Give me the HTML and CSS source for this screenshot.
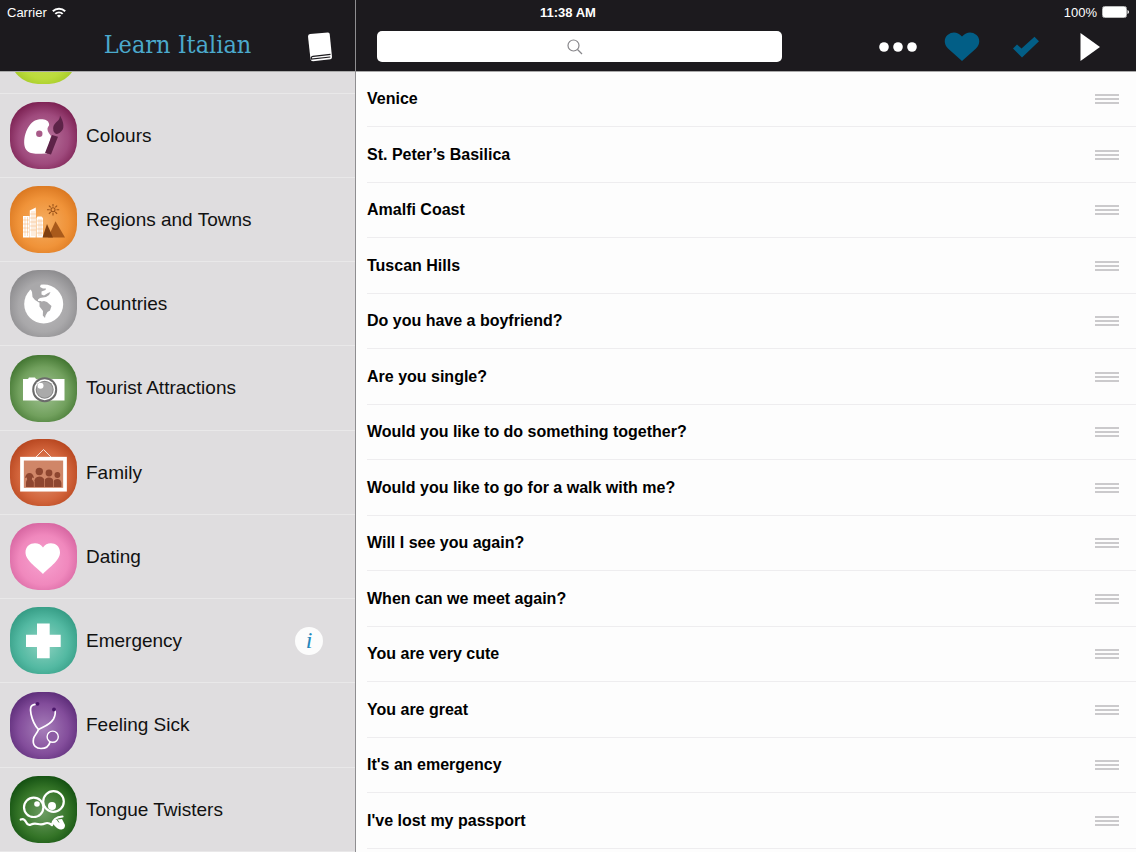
FILE: index.html
```html
<!DOCTYPE html>
<html lang="en">
<head>
  <meta charset="UTF-8">
  <meta name="viewport" content="width=device-width, initial-scale=1.0">
  <title>Learn Italian</title>
  <link rel="stylesheet" href="styles.css">
</head>
<body>
  <div class="status-bar">
    <span class="status-left">Carrier
      <svg width="14" height="11" viewBox="0 0 14 11" fill="none" stroke="#fff" stroke-width="2"><path d="M.8 4.2a9 9 0 0 1 12.4 0M3.3 6.9a5.3 5.3 0 0 1 7.4 0"/><path d="M7 10.8 4.9 8.7a3 3 0 0 1 4.2 0z" fill="#fff" stroke="none"/></svg>
    </span>
    <strong>11:38 AM</strong>
    <span class="status-right">100%
      <svg width="27" height="12" viewBox="0 0 27 12"><rect x=".5" y=".5" width="24" height="11" rx="2" fill="none" stroke="#bbb"/><rect x="1" y="1" width="23" height="10" rx="1" fill="#fff"/><path d="M25.500 4v4q1.500-.5 1.500-2t-1.500-2z" fill="#fff"/></svg>
    </span>
  </div>

  <div class="app">
    <aside class="sidebar">
      <header class="bar sidebar-bar">
        <h1>Learn Italian</h1>
        <button class="book" aria-label="Phrasebook">
          <svg width="26" height="30" viewBox="0 0 26 30"><path d="M3 2 21 .5q1.500 0 1.700 1.500L25 25q0 2-1.500 2.300L6 29.300q-2 0-2.500-2L1 4.500Q1 2.300 3 2z" fill="#fff"/><path d="M23.500 22.300 6 24.300q-2.300.7-1.700 2.700l19-2" fill="none" stroke="#1c1a1e" stroke-width="1.200"/></svg>
        </button>
      </header>

      <nav class="categories">
        <a href="#" class="category partial" aria-label="Previous category"><span class="tile lime"></span></a>

        <a href="#colours" class="category">
          <span class="tile plum"><svg viewBox="0 0 67 67">
            <path d="M38.500 20.500C38 17.500 31 16 25 18.500C16 23 11.500 40 16 47.500C21 54 31 51 37 51.500L41 34Q36 28 38 25Q40 23 38.500 20.500z" fill="#fff"/>
            <circle cx="29.300" cy="31.700" r="3.200" fill="#a85a88"/>
            <path d="M50 13.500C52 17 54.500 22 53 27Q50 32 46 32Q42 29 43.500 24C45 20 50 19 50 13.500zM42 33l6 1.700L41 52.500 35 51z" fill="#5d2348"/>
          </svg></span>
          <span>Colours</span>
        </a>

        <a href="#regions" class="category">
          <span class="tile orange"><svg viewBox="0 0 67 67">
            <path d="M13 30h6.500v21.500H13zM19.800 24.500l6-3v30h-6zM26.500 32l1-1.500h4l1.500 1.500v19.500h-6.500z" fill="#fff"/>
            <path d="M13 34h6M13 38h6M13 42h6M13 46h6M20 28h6M20 32h6M20 36h6M20 40h6M20 44h6M27 35h6M27 39h6M27 43h6M27 47h6M15 31v19M17.500 31v19M22 25v25M24 25v25M29 33v17M31 33v17" stroke="#f2a455" stroke-width=".4"/>
            <path d="M38 51.500 45.500 35.300 55 51.500z" fill="#a95a1b"/><path d="M32.500 51.500 37 38l6 13.500z" fill="#7f3f10"/>
            <g fill="none" stroke="#9a5219" stroke-width="1.100"><circle cx="43" cy="23.700" r="2"/><path d="M43 18v2.500M43 27v2.500M37 23.700h2.700M46.500 23.700h2.700M38.900 19.600l1.800 1.800M45.300 26l1.800 1.800M38.900 27.800l1.800-1.800M45.300 21.400l1.800-1.800"/></g>
          </svg></span>
          <span>Regions and Towns</span>
        </a>

        <a href="#countries" class="category">
          <span class="tile silver"><svg viewBox="0 0 67 67">
            <circle cx="33.700" cy="34" r="19.500" fill="#fff"/>
            <path d="M20 18 24 15 31 13.800 30 17 33 18.500 36 18.500 35.500 20 31.500 21.500 31.500 24.500 34 25.500 38 23 40.500 22 39 25 36 27 33 27.500 30 28 28 29.500 28 31 31 31 32 33 29 32.500 25 30 22.500 27 22 22z" fill="#a9a8aa"/>
            <path d="M29.500 32 34 31 37 32 41.500 36 40 40.500 37.500 42 35.500 45.500 35 48 32.800 45.500 33 41 29.500 36.500z" fill="#a9a8aa"/>
          </svg></span>
          <span>Countries</span>
        </a>

        <a href="#attractions" class="category">
          <span class="tile green"><svg viewBox="0 0 67 67">
            <path d="M13 24h5l1-1.500h6L26 24h28.500v21.500H13z" fill="#fff"/>
            <circle cx="34.700" cy="34.700" r="12.500" fill="#6b6b6b"/><circle cx="34.700" cy="34.700" r="10.500" fill="#fff"/>
            <circle cx="34.700" cy="34.700" r="9" fill="#888"/><circle cx="34.700" cy="34.700" r="8" fill="#aaa"/>
            <circle cx="30.500" cy="30.700" r="3" fill="#fff"/>
          </svg></span>
          <span>Tourist Attractions</span>
        </a>

        <a href="#family" class="category">
          <span class="tile rust"><svg viewBox="0 0 67 67">
            <path d="M26 18l7.500-7.500L41 18" fill="none" stroke="#fff" stroke-width=".8"/>
            <rect x="12" y="19.700" width="43" height="31" fill="#d08668" stroke="#fff" stroke-width="3.700"/>
            <g fill="#8e4630"><circle cx="29.300" cy="32.500" r="3.700"/><circle cx="39" cy="34" r="3.400"/><circle cx="47.400" cy="36" r="2.900"/><path d="M15 39q1-5 4.500-5t4.500 5l-2-.5v2h-5v-2zM16 48v-4q0-4 3.500-4t4.500 3.500Q24.500 37.500 29.300 37.500T34.500 42Q35 38.500 39 38.500t4.500 4Q44 40 47.400 40t4 4v4z"/></g>
            <path d="M24.300 42v6M34.500 41v7M43.500 41v7" stroke="#d08668" stroke-width=".7"/>
          </svg></span>
          <span>Family</span>
        </a>

        <a href="#dating" class="category">
          <span class="tile pink"><svg viewBox="0 0 67 67">
            <path d="M33 51C29 46 15.500 38 15.500 29.500C15.500 19 29 17.500 33 24.500C37 17.500 50 19 50 29.500C50 38 37 46 33 51z" fill="#fff"/>
          </svg></span>
          <span>Dating</span>
        </a>

        <a href="#emergency" class="category">
          <span class="tile teal"><svg viewBox="0 0 67 67">
            <path d="M27 16.500h12.700v11.300h11V40h-11v11.300H27V40H16V27.800h11z" fill="#fff"/>
          </svg></span>
          <span>Emergency</span>
          <span class="info">i</span>
        </a>

        <a href="#sick" class="category">
          <span class="tile violet"><svg viewBox="0 0 67 67">
            <g fill="none" stroke="#fff" stroke-width="1.700" stroke-linecap="round"><path d="M25 12.300C20 13 20 17 21 22C22.500 29 25 34 28.500 37.500C33 35 40 33 43.500 27Q46 22 45 18.500"/><path d="M28.500 37.500C27 42 24 43 23.500 47C22 54 27 56.500 31 56.500C36 56.500 39 54 40 50"/><circle cx="42.700" cy="44.700" r="5.600" fill="#8e5da5" stroke-width="1.400"/></g>
            <circle cx="27.500" cy="11.800" r="1.900" fill="#4b176b"/><circle cx="44" cy="17.500" r="1.900" fill="#4b176b"/>
          </svg></span>
          <span>Feeling Sick</span>
        </a>

        <a href="#tongue-twisters" class="category">
          <span class="tile forest"><svg viewBox="0 0 67 67">
            <g fill="none" stroke="#fff" stroke-width="2.200" stroke-linecap="round"><circle cx="23.700" cy="31.300" r="9.700"/><circle cx="43.500" cy="25.500" r="10.300"/><path d="M10.700 43.500Q14 42 16 46T21 48.500T28 48T35 47.500T42 49M42 49Q43 41 52.500 40.500"/></g>
            <circle cx="27" cy="28" r="2.800" fill="#fff"/><circle cx="42" cy="30" r="4" fill="#fff"/>
            <path d="M43 44l9-1 3 6q0 4-3.500 4.500T43 48z" fill="#fff"/><path d="M47 43.500l2 3" stroke="#2c6b22" stroke-width=".8"/>
          </svg></span>
          <span>Tongue Twisters</span>
        </a>
      </nav>
    </aside>

    <main class="content">
      <header class="bar content-bar">
        <label class="search">
          <svg width="16" height="16" viewBox="0 0 16 16" fill="none" stroke="#88878b" stroke-width="1.200"><circle cx="6.500" cy="6.500" r="5.500"/><path d="M10.500 10.500 15 15"/></svg>
          <input type="search" aria-label="Search phrases">
        </label>
        <div class="tools">
          <button aria-label="More"><svg width="38" height="10" viewBox="0 0 38 10" fill="#fff"><circle cx="5" cy="5" r="4.800"/><circle cx="19" cy="5" r="4.800"/><circle cx="33" cy="5" r="4.800"/></svg></button>
          <button aria-label="Favourites"><svg width="36" height="30" viewBox="0 0 36 30"><path d="M18 29 4 16.500C-.5 12 0 6 3.500 3Q11-2.500 18 4.500Q25-2.500 32.500 3C36 6 36.500 12 32 16.500z" fill="#025e86"/></svg></button>
          <button aria-label="Learned"><svg width="28" height="22" viewBox="0 0 28 22"><path d="M1 12.500 5 8.500 9.500 12.500 22.500.8 27 5.300 10 21.500z" fill="#025e86"/></svg></button>
          <button aria-label="Play"><svg width="20" height="28" viewBox="0 0 20 28"><path d="M.5 0 20 14 .5 28z" fill="#fff"/></svg></button>
        </div>
      </header>

      <ul class="phrases">
        <li>Venice <button class="handle" aria-label="Reorder"></button></li>
        <li>St. Peter’s Basilica <button class="handle" aria-label="Reorder"></button></li>
        <li>Amalfi Coast <button class="handle" aria-label="Reorder"></button></li>
        <li>Tuscan Hills <button class="handle" aria-label="Reorder"></button></li>
        <li>Do you have a boyfriend? <button class="handle" aria-label="Reorder"></button></li>
        <li>Are you single? <button class="handle" aria-label="Reorder"></button></li>
        <li>Would you like to do something together? <button class="handle" aria-label="Reorder"></button></li>
        <li>Would you like to go for a walk with me? <button class="handle" aria-label="Reorder"></button></li>
        <li>Will I see you again? <button class="handle" aria-label="Reorder"></button></li>
        <li>When can we meet again? <button class="handle" aria-label="Reorder"></button></li>
        <li>You are very cute <button class="handle" aria-label="Reorder"></button></li>
        <li>You are great <button class="handle" aria-label="Reorder"></button></li>
        <li>It's an emergency <button class="handle" aria-label="Reorder"></button></li>
        <li>I've lost my passport <button class="handle" aria-label="Reorder"></button></li>
      </ul>
    </main>
  </div>
</body>
</html>
```
FILE: styles.css
```css
:root {
  --bar: #1c1a1e;
  --panel: #dfdddf;
  --blue: #4ba9cc;
}
* {
  margin: 0;
  padding: 0;
  box-sizing: border-box;
}
body {
  font-family: "Liberation Sans", Arial, sans-serif;
  color: #000;
  height: 100vh;
  overflow: hidden;
}
button {
  display: flex;
  justify-content: center;
  background: none;
  border: none;
  cursor: pointer;
}
svg {
  display: block;
}

/* status bar lies over both headers */
.status-bar {
  position: absolute;
  top: 0;
  left: 0;
  right: 0;
  z-index: 1;
  display: grid;
  grid-template-columns: 1fr auto 1fr;
  align-items: center;
  height: 24px;
  padding: 0 7px;
  color: #fff;
  font-size: 13px;
}
.status-left,
.status-right {
  display: flex;
  align-items: center;
  gap: 5px;
}
.status-right {
  justify-content: flex-end;
}

.app {
  display: flex;
  height: 100%;
}
.bar {
  display: flex;
  align-items: center;
  flex: none;
  height: 72px;
  padding-top: 22px;
  background: var(--bar);
  border-bottom: 1px solid #aaa;
}

.sidebar {
  flex: 0 0 356px;
  display: flex;
  flex-direction: column;
  background: var(--panel);
  border-right: 1px solid #8f8e91;
}
.sidebar-bar {
  padding-left: 48px;
  padding-right: 22px;
}
h1 {
  flex: 1;
  padding-bottom: 4px;
  color: var(--blue);
  font-family: "DejaVu Serif Condensed", "DejaVu Serif", serif;
  font-size: 25px;
  font-weight: normal;
  line-height: 30px;
  text-align: center;
}
.categories {
  flex: 1;
  min-height: 0;
  overflow: hidden;
}
.category {
  display: flex;
  align-items: center;
  gap: 9px;
  height: 84px;
  padding: 0 32px 0 10px;
  border-bottom: 1px solid #e9e8e9;
  color: #111;
  font-size: 19px;
  text-decoration: none;
}
.category:nth-child(4n+1) {
  height: 85px;
}
.category.partial {
  height: 22px;
  align-items: flex-end;
  padding-bottom: 9px;
}
.tile {
  flex: none;
  width: 67px;
  height: 67px;
  border-radius: 28px;
  background: radial-gradient(circle at 50% 55%, var(--light), var(--mid) 50%, var(--dark) 85%);
}
.lime { --light: #c9e05a; --mid: #bcdc3c; --dark: #96bd1b; }
.plum { --light: #b9789f; --mid: #9f4a7d; --dark: #701344; }
.orange { --light: #f5ae62; --mid: #f09339; --dark: #d4701a; }
.silver { --light: #bcbbbd; --mid: #a9a8aa; --dark: #838285; }
.green { --light: #a3c596; --mid: #71a05d; --dark: #346824; }
.rust { --light: #dd9674; --mid: #d3653c; --dark: #af3d17; }
.pink { --light: #f7a2cf; --mid: #f088bd; --dark: #cf5c99; }
.teal { --light: #8dd2c0; --mid: #53b9a2; --dark: #2c937c; }
.violet { --light: #a77fba; --mid: #834d9b; --dark: #52236f; }
.forest { --light: #6d9c63; --mid: #347427; --dark: #09450b; }
.info {
  width: 28px;
  height: 28px;
  margin-left: auto;
  border-radius: 50%;
  background: #fcfcfc;
  color: #2687bb;
  font: italic 24px/26px "Liberation Serif", serif;
  text-align: center;
}

.content {
  flex: 1;
  min-width: 0;
  background: #fdfdfd;
}
.content-bar {
  gap: 84px;
  padding-left: 21px;
  padding-right: 14px;
}
.search {
  position: relative;
  flex: 1;
}
.search svg {
  position: absolute;
  left: 49%;
  top: 50%;
  transform: translate(-50%, -50%);
}
.search input {
  display: block;
  width: 100%;
  height: 31px;
  padding: 0 10px;
  border: none;
  border-radius: 5px;
  background: #fff;
  font-size: 16px;
}
.tools {
  display: flex;
  align-items: center;
}
.tools button {
  width: 64px;
}

.phrases {
  list-style: none;
  padding-left: 11px;
}
.phrases li {
  display: flex;
  align-items: center;
  justify-content: space-between;
  height: 55px;
  padding-right: 17px;
  border-bottom: 1px solid #eeedef;
  font-size: 16px;
  font-weight: bold;
}
.phrases li:nth-child(even) {
  height: 56px;
}
.handle {
  width: 24px;
  height: 10px;
  border-top: 2px solid #cbcacc;
  border-bottom: 2px solid #cbcacc;
  background: linear-gradient(#cbcacc, #cbcacc) center / 100% 2px no-repeat;
}
```
